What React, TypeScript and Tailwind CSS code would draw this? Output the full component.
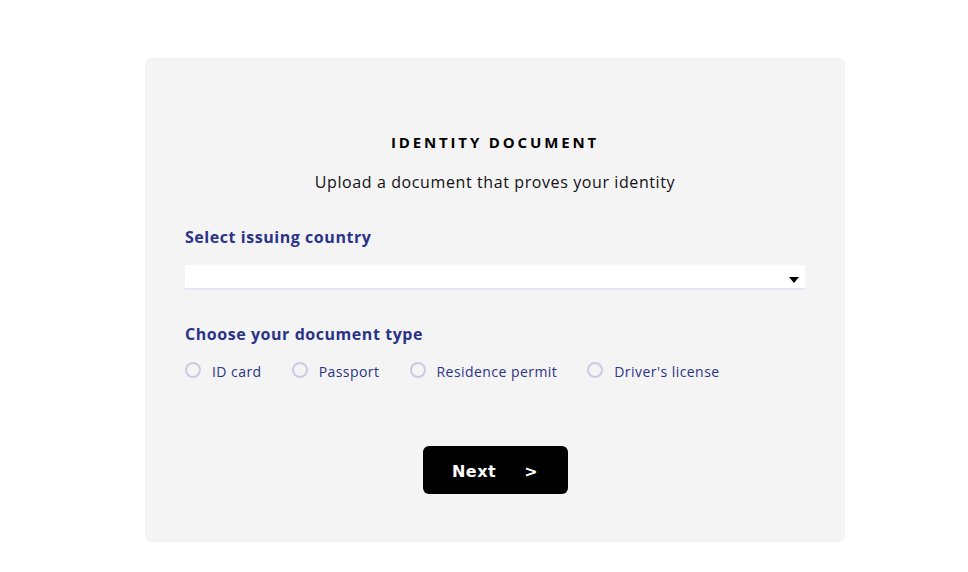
import React from "react";

const font = { fontFamily: '"Open Sans", "Noto Sans", sans-serif' };

export default function App() {
  const types = ["ID card", "Passport", "Residence permit", "Driver's license"];
  return (
    <div className="w-[968px] h-[572px] bg-white pt-[58px] pl-[145px]" style={font}>
      <div className="w-[700px] h-[484px] bg-[#f4f4f4] rounded-[6px] flex flex-col px-[40px] pt-[74px]">
        <h1 className="shrink-0 text-center text-[15px] font-bold tracking-[2.85px] text-black leading-[20px]">
          IDENTITY DOCUMENT
        </h1>
        <p className="shrink-0 text-center text-[16px] text-[#111] leading-[22px] mt-[19px] tracking-[0.6px]">
          Upload a document that proves your identity
        </p>
        <h2 className="shrink-0 text-[16px] font-bold text-[#2a3387] leading-[22px] mt-[33px] tracking-[0.55px]">
          Select issuing country
        </h2>
        <div className="shrink-0 mt-[17px] h-[25px] bg-white border-b-[2px] border-[#e6e6f4] flex items-center justify-end pr-[6px]">
          <svg width="10" height="6" viewBox="0 0 10 6" className="mt-[6px]">
            <path d="M0 0 H10 L5 6 Z" fill="#000" />
          </svg>
        </div>
        <h2 className="shrink-0 text-[16px] font-bold text-[#2a3387] leading-[22px] mt-[33px] tracking-[0.55px]">
          Choose your document type
        </h2>
        <div className="shrink-0 flex items-center gap-[30px] mt-[15px] h-[20px]">
          {types.map((t) => (
            <label key={t} className="flex items-center gap-[11px]">
              <span className="w-[16px] h-[16px] rounded-full border-[2px] border-[#cacbe3] bg-[#f4f4f4]" />
              <span className="text-[14px] text-[#2a3387] leading-[20px] tracking-[0.45px] translate-y-[2px]">{t}</span>
            </label>
          ))}
        </div>
        <div className="shrink-0 flex justify-center mt-[66px]">
          <button
            className="w-[145px] h-[48px] bg-black rounded-[6px] text-white text-[16px] font-bold flex items-center justify-center gap-[28px] tracking-[0.5px]"
            style={{ fontFamily: '"DejaVu Sans", sans-serif' }}
          >
            <span className="translate-y-[2px]">Next</span>
            <span className="translate-y-[2px]">&gt;</span>
          </button>
        </div>
      </div>
    </div>
  );
}
